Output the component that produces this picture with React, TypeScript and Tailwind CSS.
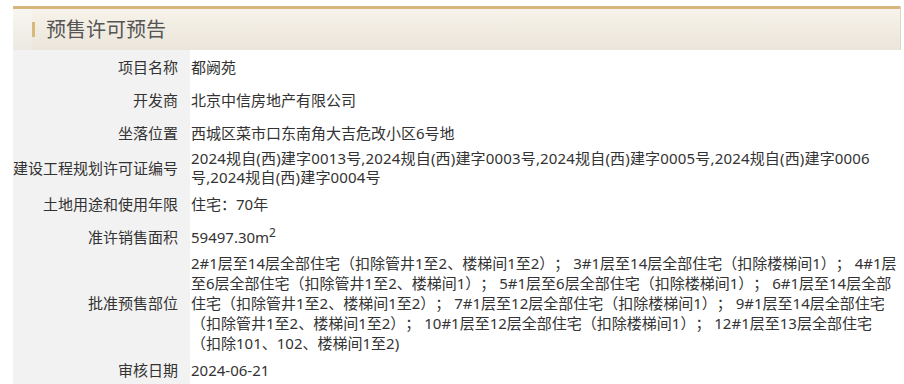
import React from "react";

const rows: { label: string; value: React.ReactNode; extra?: string }[] = [
  { label: "项目名称", value: "都阙苑" },
  { label: "开发商", value: "北京中信房地产有限公司" },
  { label: "坐落位置", value: "西城区菜市口东南角大吉危改小区6号地" },
  {
    label: "建设工程规划许可证编号",
    extra: "leading-[19px] tracking-[0.17px]",
    value: (
      <>
        2024规自(西)建字0013号,2024规自(西)建字0003号,2024规自(西)建字0005号,2024规自(西)建字0006
        <br />
        号,2024规自(西)建字0004号
      </>
    ),
  },
  { label: "土地用途和使用年限", value: "住宅：70年" },
  {
    label: "准许销售面积",
    value: (
      <>
        59497.30m<sup className="text-[12px]">2</sup>
      </>
    ),
  },
  {
    label: "批准预售部位",
    value: (
      <>
        2#1层至14层全部住宅（扣除管井1至2、楼梯间1至2）； 3#1层至14层全部住宅（扣除楼梯间1）； 4#1层
        <br />
        至6层全部住宅（扣除管井1至2、楼梯间1）； 5#1层至6层全部住宅（扣除楼梯间1）； 6#1层至14层全部
        <br />
        住宅（扣除管井1至2、楼梯间1至2）； 7#1层至12层全部住宅（扣除楼梯间1）； 9#1层至14层全部住宅
        <br />
        （扣除管井1至2、楼梯间1至2）； 10#1层至12层全部住宅（扣除楼梯间1）； 12#1层至13层全部住宅
        <br />
        （扣除101、102、楼梯间1至2)
      </>
    ),
  },
  { label: "审核日期", value: "2024-06-21" },
];

export default function App() {
  return (
    <div
      className="w-[904px] h-[384px] overflow-hidden bg-white [text-spacing-trim:space-all]"
      style={{ fontFamily: '"Noto Sans", "Noto Sans CJK SC", sans-serif' }}
    >
      <div className="ml-[13px] w-[887px] pt-[6px]">
        <div className="flex h-[44px] items-stretch border-t-[3px] border-[#d6b67c] bg-gradient-to-b from-[#f7f3ea] to-[#ebe5da] shadow-[1px_0_0_#ddd6c8]">
          <div className="w-[19px] bg-gradient-to-b from-[#f8f6f0] to-[#ece9e2]" />
          <div className="flex items-center">
            <div className="h-[15px] w-[3px] bg-[#d8b87b]" />
            <div className="ml-[11px] text-[20px] leading-none text-[#555]">预售许可预告</div>
          </div>
        </div>
        <div className="text-[15px] leading-[20px] text-[#333]">
          {rows.map((r) => (
            <div key={r.label} className="grid grid-cols-[177px_1fr]">
              <div className="flex min-h-[33px] items-center justify-end whitespace-nowrap bg-[#f2f2f2] pr-[12px]">
                {r.label}
              </div>
              <div className="flex min-h-[33px] items-center whitespace-nowrap pl-[1px]">
                <div className={r.extra}>{r.value}</div>
              </div>
            </div>
          ))}
        </div>
      </div>
    </div>
  );
}
